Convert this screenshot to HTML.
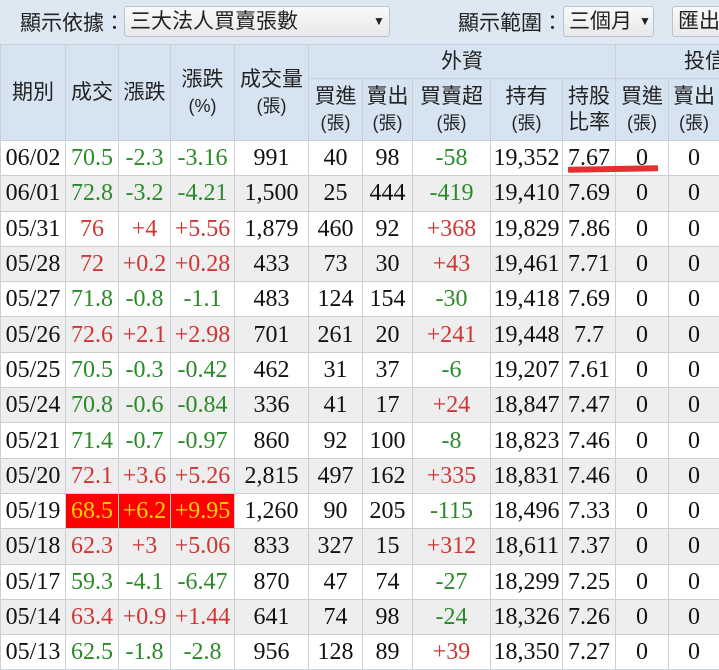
<!DOCTYPE html>
<html><head><meta charset="utf-8"><style>
body{margin:0;width:719px;height:670px;overflow:hidden;background:#fff;position:relative;font-family:"Liberation Serif","Noto Serif CJK SC",serif;}
.top{position:absolute;left:0;top:0;width:719px;height:44px;background:#dde8f3;font-family:"Liberation Sans","Noto Sans CJK TC",sans-serif;font-size:21px;color:#222;}
.top span{position:absolute;top:7px;}
.sel{position:absolute;top:6px;height:31px;background:linear-gradient(#fafafa,#e8e8e8);border:1px solid #b8c4cf;border-radius:3px;box-sizing:border-box;font-size:21px;line-height:29px;padding-left:5px;}
table{position:absolute;left:0;top:44px;border-collapse:collapse;table-layout:fixed;width:719px;}
td,th{border:1px solid #c8d0d8;text-align:center;padding:0;white-space:nowrap;overflow:hidden;}
th{background:#d6e4f2;font-weight:normal;font-family:"Liberation Sans","Noto Sans CJK TC",sans-serif;font-size:21px;color:#222;line-height:26px;}
th small{font-size:18px;}
td{font-size:24px;height:34.3px;line-height:30px;color:#111;}
tr.g td{background:#eeeeee;}
.gr{color:#2a8a2a}.rd{color:#d03535}
.hl{background:#f00!important;color:#ffd700}
</style></head><body>
<div class="top">
<span style="left:20px">顯示依據：</span>
<div class="sel" style="left:124px;width:266px">三大法人買賣張數<span style="left:248px;top:0;font-size:12px">▼</span></div>
<span style="left:458px">顯示範圍：</span>
<div class="sel" style="left:563px;width:91px">三個月<span style="left:75px;top:0;font-size:12px">▼</span></div>
<div class="sel" style="left:672px;width:60px">匯出</div>
</div>
<table>
<colgroup><col style="width:65px"><col style="width:53px"><col style="width:52px"><col style="width:64px"><col style="width:74px"><col style="width:54px"><col style="width:50px"><col style="width:78px"><col style="width:72px"><col style="width:53px"><col style="width:53px"><col style="width:51px"></colgroup>
<tr style="height:34px"><th rowspan="2">期別</th><th rowspan="2">成交</th><th rowspan="2">漲跌</th><th rowspan="2">漲跌<br><small>(%)</small></th><th rowspan="2">成交量<br><small>(張)</small></th><th colspan="5">外資</th><th colspan="2" style="text-align:left;padding-left:68px">投信</th></tr>
<tr style="height:62px"><th>買進<br><small>(張)</small></th><th>賣出<br><small>(張)</small></th><th>買賣超<br><small>(張)</small></th><th>持有<br><small>(張)</small></th><th>持股<br>比率</th><th>買進<br><small>(張)</small></th><th>賣出<br><small>(張)</small></th></tr>
<tr><td>06/02</td><td class="gr">70.5</td><td class="gr">-2.3</td><td class="gr">-3.16</td><td>991</td><td>40</td><td>98</td><td class="gr">-58</td><td>19,352</td><td>7.67</td><td>0</td><td>0</td></tr>
<tr class="g"><td>06/01</td><td class="gr">72.8</td><td class="gr">-3.2</td><td class="gr">-4.21</td><td>1,500</td><td>25</td><td>444</td><td class="gr">-419</td><td>19,410</td><td>7.69</td><td>0</td><td>0</td></tr>
<tr><td>05/31</td><td class="rd">76</td><td class="rd">+4</td><td class="rd">+5.56</td><td>1,879</td><td>460</td><td>92</td><td class="rd">+368</td><td>19,829</td><td>7.86</td><td>0</td><td>0</td></tr>
<tr class="g"><td>05/28</td><td class="rd">72</td><td class="rd">+0.2</td><td class="rd">+0.28</td><td>433</td><td>73</td><td>30</td><td class="rd">+43</td><td>19,461</td><td>7.71</td><td>0</td><td>0</td></tr>
<tr><td>05/27</td><td class="gr">71.8</td><td class="gr">-0.8</td><td class="gr">-1.1</td><td>483</td><td>124</td><td>154</td><td class="gr">-30</td><td>19,418</td><td>7.69</td><td>0</td><td>0</td></tr>
<tr class="g"><td>05/26</td><td class="rd">72.6</td><td class="rd">+2.1</td><td class="rd">+2.98</td><td>701</td><td>261</td><td>20</td><td class="rd">+241</td><td>19,448</td><td>7.7</td><td>0</td><td>0</td></tr>
<tr><td>05/25</td><td class="gr">70.5</td><td class="gr">-0.3</td><td class="gr">-0.42</td><td>462</td><td>31</td><td>37</td><td class="gr">-6</td><td>19,207</td><td>7.61</td><td>0</td><td>0</td></tr>
<tr class="g"><td>05/24</td><td class="gr">70.8</td><td class="gr">-0.6</td><td class="gr">-0.84</td><td>336</td><td>41</td><td>17</td><td class="rd">+24</td><td>18,847</td><td>7.47</td><td>0</td><td>0</td></tr>
<tr><td>05/21</td><td class="gr">71.4</td><td class="gr">-0.7</td><td class="gr">-0.97</td><td>860</td><td>92</td><td>100</td><td class="gr">-8</td><td>18,823</td><td>7.46</td><td>0</td><td>0</td></tr>
<tr class="g"><td>05/20</td><td class="rd">72.1</td><td class="rd">+3.6</td><td class="rd">+5.26</td><td>2,815</td><td>497</td><td>162</td><td class="rd">+335</td><td>18,831</td><td>7.46</td><td>0</td><td>0</td></tr>
<tr><td>05/19</td><td class="hl">68.5</td><td class="hl">+6.2</td><td class="hl">+9.95</td><td>1,260</td><td>90</td><td>205</td><td class="gr">-115</td><td>18,496</td><td>7.33</td><td>0</td><td>0</td></tr>
<tr class="g"><td>05/18</td><td class="rd">62.3</td><td class="rd">+3</td><td class="rd">+5.06</td><td>833</td><td>327</td><td>15</td><td class="rd">+312</td><td>18,611</td><td>7.37</td><td>0</td><td>0</td></tr>
<tr><td>05/17</td><td class="gr">59.3</td><td class="gr">-4.1</td><td class="gr">-6.47</td><td>870</td><td>47</td><td>74</td><td class="gr">-27</td><td>18,299</td><td>7.25</td><td>0</td><td>0</td></tr>
<tr class="g"><td>05/14</td><td class="rd">63.4</td><td class="rd">+0.9</td><td class="rd">+1.44</td><td>641</td><td>74</td><td>98</td><td class="gr">-24</td><td>18,326</td><td>7.26</td><td>0</td><td>0</td></tr>
<tr><td>05/13</td><td class="gr">62.5</td><td class="gr">-1.8</td><td class="gr">-2.8</td><td>956</td><td>128</td><td>89</td><td class="rd">+39</td><td>18,350</td><td>7.27</td><td>0</td><td>0</td></tr>
</table>
<div style="position:absolute;left:568px;top:166px;width:90px;height:6px;background:#e53030;transform:rotate(-1deg);border-radius:1px"></div>
</body></html>
